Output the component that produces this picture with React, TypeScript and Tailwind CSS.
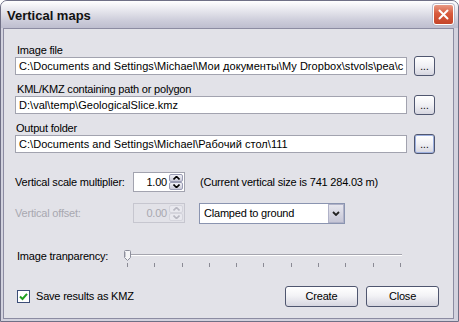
import React from "react";

const FONT = "font-['Liberation_Sans',Arial,sans-serif]";

function Browse({ focused }: { focused?: boolean }) {
  return (
    <div
      className={`ml-[7px] w-[21px] h-[20px] rounded-[3px] border border-[#4f566f] bg-[linear-gradient(180deg,#ffffff_0%,#f0f0f4_50%,#d6d6e0_100%)] flex items-end justify-center pb-[3px] text-[10px] leading-none tracking-normal text-black ${
        focused ? "shadow-[inset_0_0_0_1px_#9db0df]" : ""
      }`}
    >
      ...
    </div>
  );
}

function PathInput({ value }: { value: string }) {
  return (
    <div className="w-[392px] h-[18px] border border-[#a2a3af] bg-white pl-[3px] overflow-hidden whitespace-nowrap text-[11px] leading-[16px] tracking-[0.04px] text-black">
      {value}
    </div>
  );
}

function Arrow({ up, color }: { up?: boolean; color: string }) {
  return (
    <svg width="7" height="4" viewBox="0 0 7 4">
      {up ? (
        <path d="M0.5 3.5 L3.5 0.5 L6.5 3.5" fill="none" stroke={color} strokeWidth="1.6" />
      ) : (
        <path d="M0.5 0.5 L3.5 3.5 L6.5 0.5" fill="none" stroke={color} strokeWidth="1.6" />
      )}
    </svg>
  );
}

function Spin({ value, disabled }: { value: string; disabled?: boolean }) {
  const btn = disabled
    ? "border-[#d4d4dc] bg-[#e8e8ee]"
    : "border-[#9a9cb4] bg-[linear-gradient(180deg,#f2f2f7,#c9c9d8)]";
  const arrowColor = disabled ? "#b8b8c2" : "#000000";
  return (
    <div
      className={`w-[52px] h-[20px] border flex ${
        disabled ? "border-[#c6c6cf] bg-[#e2e2e8]" : "border-[#a2a3af] bg-white"
      }`}
    >
      <div
        className={`flex-1 text-right pr-[2px] text-[11px] leading-[18px] ${
          disabled ? "text-[#a8a8b0]" : "text-black"
        }`}
      >
        {value}
      </div>
      <div className="w-[15px] flex flex-col py-px pr-px gap-0">
        <div className={`flex-1 border rounded-[2px] flex items-center justify-center ${btn}`}>
          <Arrow up color={arrowColor} />
        </div>
        <div className={`flex-1 border rounded-[2px] flex items-center justify-center ${btn}`}>
          <Arrow color={arrowColor} />
        </div>
      </div>
    </div>
  );
}

function Button({ label }: { label: string }) {
  return (
    <div className="w-[73px] h-[21px] rounded-[3px] border border-[#4f566f] bg-[linear-gradient(180deg,#ffffff_0%,#f3f3f6_45%,#d6d6e0_100%)] flex items-center justify-center text-[11px] text-black">
      {label}
    </div>
  );
}

export default function App() {
  const ticks = Array.from({ length: 11 });
  return (
    <div className={`w-[459px] h-[322px] bg-white ${FONT}`}>
      <div className="w-[459px] h-[322px] flex flex-col rounded-t-[7px] border border-[#6f7086] bg-[#d2d2de] overflow-hidden">
        {/* title bar */}
        <div className="h-[27px] shrink-0 flex items-center justify-between pl-[6px] pr-[4px] bg-[linear-gradient(180deg,#ffffff_0%,#eaeaf0_30%,#cbcbd9_75%,#bebecf_100%)]">
          <span className="text-[13px] font-bold text-[#111111] pt-[3px]">Vertical maps</span>
          <div className="w-[21px] h-[21px] rounded-[3px] border border-white bg-[linear-gradient(180deg,#e89a84_0%,#d85a3c_45%,#c5452a_100%)] flex items-center justify-center shadow-[0_0_0_1px_#b9b9c8]">
            <svg width="11" height="11" viewBox="0 0 11 11">
              <path d="M1.5 1.5 L9.5 9.5 M9.5 1.5 L1.5 9.5" stroke="white" strokeWidth="2" strokeLinecap="round" />
            </svg>
          </div>
        </div>
        {/* frame */}
        <div className="flex-1 flex pl-[2px] pr-[4px] pb-[2px]">
          <div className="flex-1 border border-[#8c8ca2] bg-[#e2e2e8] flex flex-col pl-[11px] pt-[15px] text-[11px] tracking-[-0.2px] text-black">
            <div className="ml-[2px] h-[12px] leading-[12px]">Image file</div>
            <div className="h-[20px] flex items-center">
              <PathInput value="C:\Documents and Settings\Michael\Мои документы\My Dropbox\stvols\pea\c" />
              <Browse />
            </div>
            <div className="mt-[7px] ml-[2px] h-[12px] leading-[12px]">KML/KMZ containing path or polygon</div>
            <div className="h-[20px] flex items-center">
              <PathInput value="D:\val\temp\GeologicalSlice.kmz" />
              <Browse />
            </div>
            <div className="mt-[7px] ml-[1px] h-[12px] leading-[12px]">Output folder</div>
            <div className="h-[20px] flex items-center">
              <PathInput value="C:\Documents and Settings\Michael\Рабочий стол\111" />
              <Browse focused />
            </div>

            <div className="mt-[18px] h-[20px] flex items-center">
              <div className="w-[118px]">Vertical scale multiplier:</div>
              <Spin value="1.00" />
              <div className="ml-[15px]">(Current vertical size is 741 284.03 m)</div>
            </div>

            <div className="mt-[11px] h-[20px] flex items-center">
              <div className="w-[118px] text-[#a8a8b0]">Vertical offset:</div>
              <Spin value="0.00" disabled />
              <div className="ml-[14px] w-[146px] h-[21px] border border-[#8a94b0] bg-white flex items-center">
                <div className="flex-1 pl-[4px] leading-[19px]">Clamped to ground</div>
                <div className="w-[16px] h-[19px] border border-[#b0b2c8] bg-[linear-gradient(180deg,#e6e6ee,#c6c6d6)] flex items-center justify-center">
                  <svg width="8" height="5" viewBox="0 0 8 5">
                    <path d="M1 1 L4 4 L7 1" fill="none" stroke="#222" strokeWidth="1.8" />
                  </svg>
                </div>
              </div>
            </div>

            <div className="mt-[27px] h-[12px] flex items-center">
              <div className="ml-[2px] w-[107px] pt-[1px]">Image tranparency:</div>
              <div className="relative w-[278px] h-[12px]">
                <div className="absolute left-[3px] right-0 top-[4px] h-[1px] bg-[#a5a5ae]" />
                <div className="absolute left-[3px] right-0 top-[5px] h-[1px] bg-white" />
                <svg className="absolute left-0 top-0" width="7" height="11" viewBox="0 0 7 11">
                  <path d="M0.5 1.5 Q0.5 0.5 1.5 0.5 L5.5 0.5 Q6.5 0.5 6.5 1.5 L6.5 7.5 L3.5 10.5 L0.5 7.5 Z" fill="#f4f4f6" stroke="#8d8f9c" />
                  <path d="M1.5 2 L1.5 7" stroke="#c8c8d0" />
                </svg>
              </div>
            </div>
            <div className="mt-[1px] ml-[112px] w-[274px] h-[4px] flex justify-between">
              {ticks.map((_, i) => (
                <div key={i} className="w-px h-[4px] bg-[#8a8a94]" />
              ))}
            </div>

            <div className="mt-[19px] h-[21px] flex items-center">
              <div className="ml-[2px] w-[13px] h-[13px] border border-[#3c4e78] bg-white flex items-center justify-center">
                <svg width="9" height="9" viewBox="0 0 9 9">
                  <path d="M1 4.5 L3.5 7 L8 1.8" fill="none" stroke="#21a121" strokeWidth="2" />
                </svg>
              </div>
              <div className="ml-[6px]">Save results as KMZ</div>
              <div className="ml-auto mr-[14px] flex gap-[8px]">
                <Button label="Create" />
                <Button label="Close" />
              </div>
            </div>
          </div>
        </div>
      </div>
    </div>
  );
}
